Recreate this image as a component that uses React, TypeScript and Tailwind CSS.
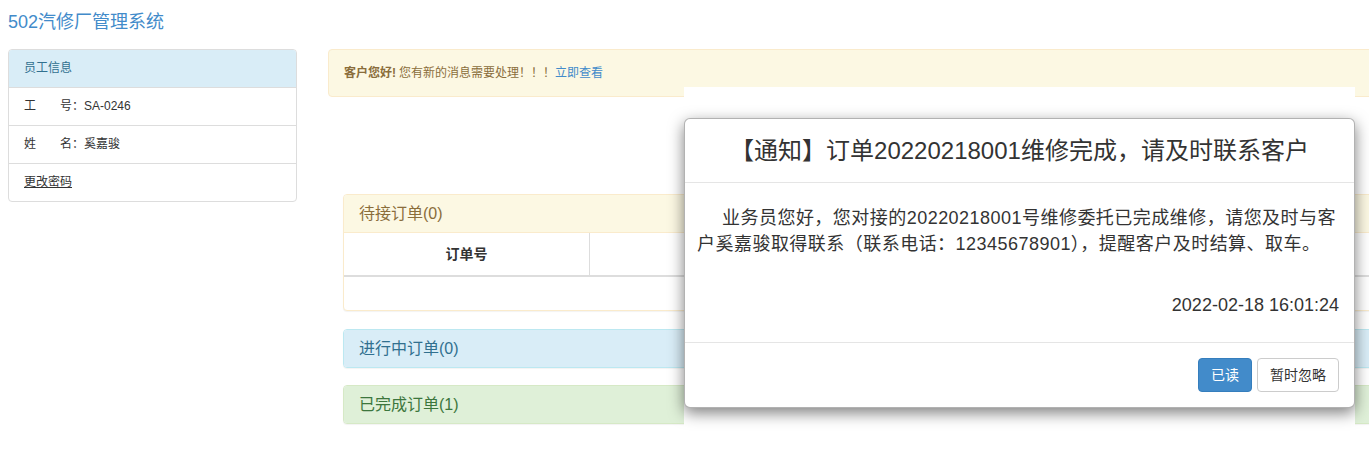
const font = "font-['Liberation_Sans','Noto_Sans_CJK_SC',sans-serif]";

function Panel({ title, tone, children, className = "" }: { title: string; tone: "warning" | "info" | "success"; children?: React.ReactNode; className?: string }) {
  const tones = {
    warning: "border-[#faebcc] bg-[#fcf8e3] text-[#8a6d3b]",
    info: "border-[#bce8f1] bg-[#d9edf7] text-[#31708f]",
    success: "border-[#d6e9c6] bg-[#dff0d8] text-[#3c763d]",
  };
  const borders = { warning: "border-[#faebcc]", info: "border-[#bce8f1]", success: "border-[#d6e9c6]" };
  return (
    <div className={`rounded-[4px] border bg-white shadow-[0_1px_1px_rgba(0,0,0,0.05)] ${borders[tone]} ${className}`}>
      <div className={`flex items-center rounded-t-[3px] px-[15px] text-[16px] ${tones[tone]} ${children ? "h-[38px] border-b" : "h-[37px] rounded-b-[3px] border-0"}`}>
        {title}
      </div>
      {children}
    </div>
  );
}

export default function App() {
  const cols = ["订单号", "", "", ""];
  return (
    <div className={`relative h-[449px] w-[1369px] overflow-hidden bg-white text-[#333] ${font}`}>
      <div className="flex pl-[8px]">
        {/* left column */}
        <div className="w-[289px] shrink-0">
          <div className="h-[49px] pt-[12px] text-[18px] leading-[20px] text-[#428bca]">502汽修厂管理系统</div>
          <div className="overflow-hidden rounded-[4px] border border-[#ddd] text-[12px] leading-[17px]">
            <div className="flex h-[38px] items-center border-b border-[#ddd] bg-[#d9edf7] px-[15px] text-[#31708f]">员工信息</div>
            <div className="flex h-[38px] items-center border-b border-[#ddd] px-[15px]">
              <span>工</span>
              <span className="w-[24px]" />
              <span>号：SA-0246</span>
            </div>
            <div className="flex h-[38px] items-center border-b border-[#ddd] px-[15px]">
              <span>姓</span>
              <span className="w-[24px]" />
              <span>名：奚嘉骏</span>
            </div>
            <div className="flex h-[37px] items-center px-[15px]">
              <a className="text-[#333] underline">更改密码</a>
            </div>
          </div>
        </div>

        {/* right column */}
        <div className="ml-[31px] w-[1060px] shrink-0 pt-[49px]">
          <div className="flex h-[48px] items-center rounded-[4px] border border-[#faebcc] bg-[#fcf8e3] px-[15px] text-[12px] text-[#8a6d3b]">
            <b>客户您好!</b>
            <span className="ml-[3px]">您有新的消息需要处理！！！</span>
            <a className="text-[#428bca]">立即查看</a>
          </div>

          <div className="mt-[97px] pl-[15px]">
            <Panel title="待接订单(0)" tone="warning" className="mb-[18px]">
              <div className="grid grid-cols-[246px_246px_246px_1fr] border-b-2 border-[#ddd] text-[14px] font-bold">
                {cols.map((c, i) => (
                  <div key={i} className={`flex h-[42px] items-center justify-center ${i < 3 ? "border-r border-[#ddd]" : ""}`}>{c}</div>
                ))}
              </div>
              <div className="h-[33px]" />
            </Panel>
            <Panel title="进行中订单(0)" tone="info" className="mb-[17px]" />
            <Panel title="已完成订单(1)" tone="success" />
          </div>
        </div>
      </div>

      {/* notification dialog */}
      <div className="absolute left-[684px] top-[87px] h-[362px] w-[671px] bg-white">
        <div className="mt-[31px] rounded-[6px] border border-[rgba(0,0,0,0.3)] bg-white shadow-[0_5px_15px_rgba(0,0,0,0.5)]">
          <div className="flex h-[64px] items-center justify-center border-b border-[#e5e5e5] text-[24px] leading-[26px]">
            【通知】订单20220218001维修完成，请及时联系客户
          </div>
          <div className="h-[159px] px-[12px] pt-[22px] text-[18px] leading-[26px] tracking-[0.47px]">
            <p className="indent-[25px]">
              业务员您好，您对接的20220218001号维修委托已完成维修，请您及时与客户奚嘉骏取得联系（联系电话：12345678901），提醒客户及时结算、取车。
            </p>
            <p className="mt-[35px] pr-[3px] text-right tracking-normal">2022-02-18 16:01:24</p>
          </div>
          <div className="flex justify-end gap-[5px] border-t border-[#e5e5e5] px-[15px] pb-[15px] pt-[15px] text-[14px] leading-[20px]">
            <button className="h-[34px] rounded-[4px] border border-[#357ebd] bg-[#428bca] px-[12px] text-white">已读</button>
            <button className="h-[34px] rounded-[4px] border border-[#ccc] bg-white px-[12px] text-[#333]">暂时忽略</button>
          </div>
        </div>
      </div>
    </div>
  );
}
